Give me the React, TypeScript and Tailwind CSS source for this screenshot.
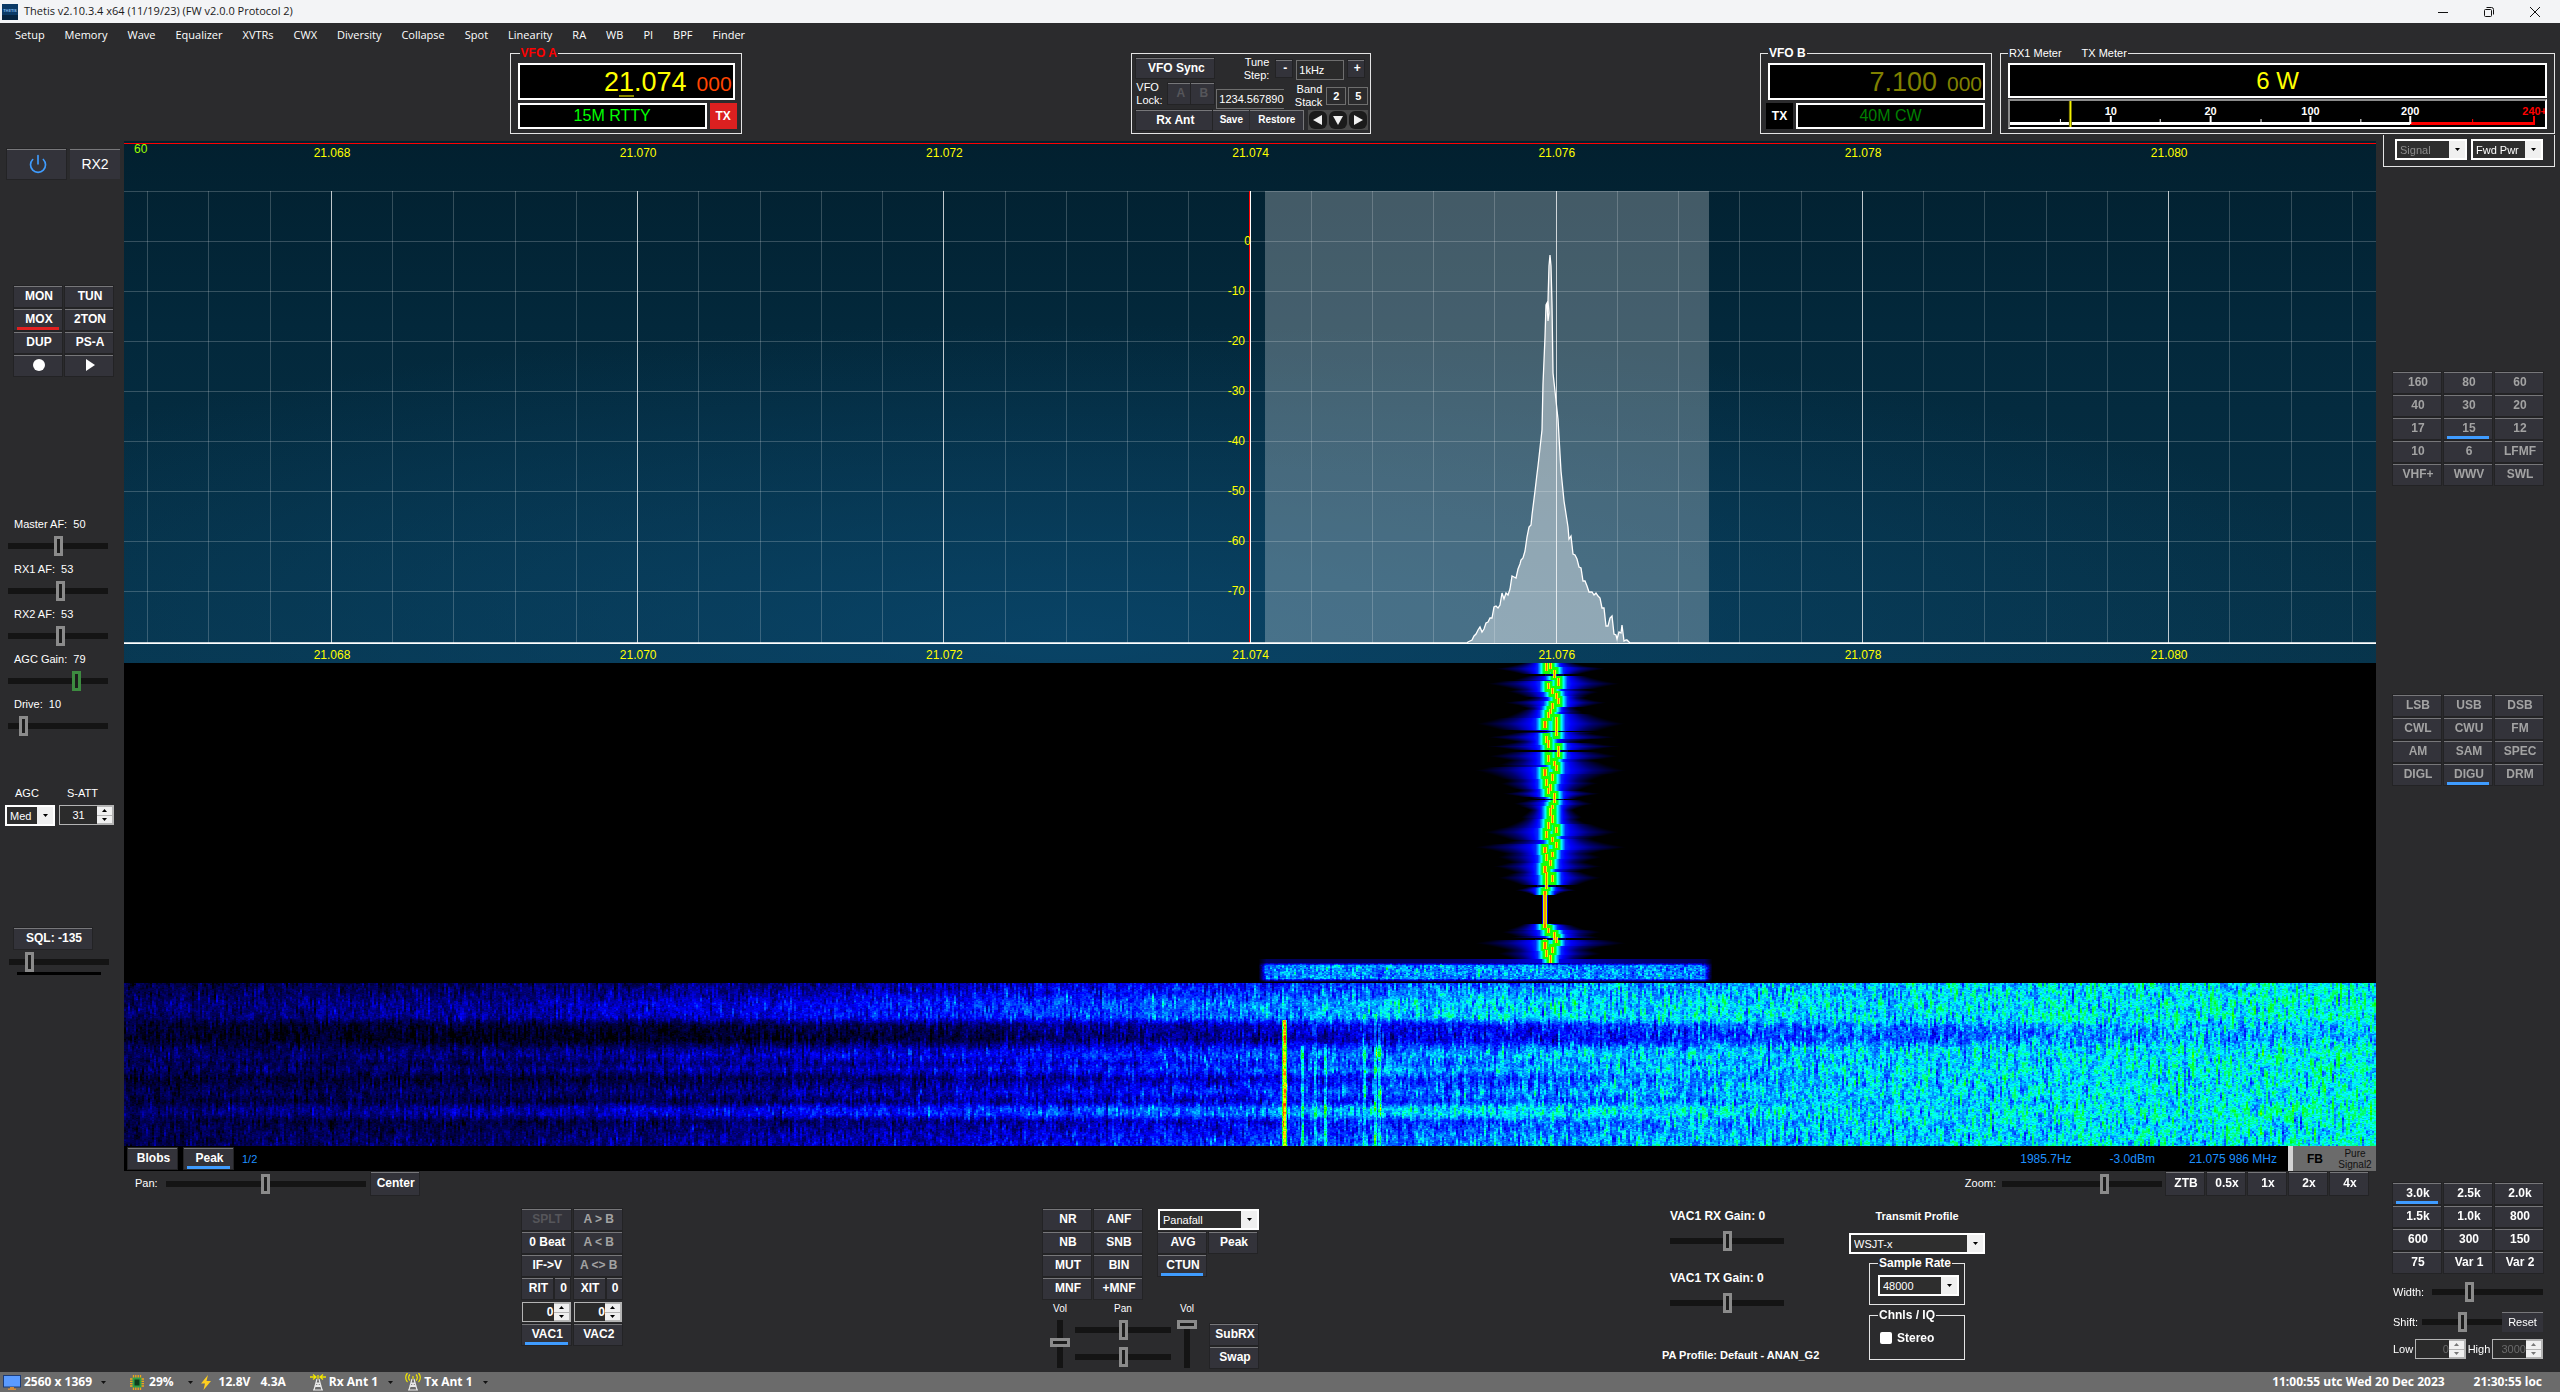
import { useEffect, useRef, type ReactNode } from 'react';
import { Power } from 'lucide-react';

const MENU = ['Setup', 'Memory', 'Wave', 'Equalizer', 'XVTRs', 'CWX', 'Diversity', 'Collapse', 'Spot', 'Linearity', 'RA', 'WB', 'PI', 'BPF', 'Finder'];
const BANDS = ['160', '80', '60', '40', '30', '20', '17', '15', '12', '10', '6', 'LFMF', 'VHF+', 'WWV', 'SWL'];
const MODES = ['LSB', 'USB', 'DSB', 'CWL', 'CWU', 'FM', 'AM', 'SAM', 'SPEC', 'DIGL', 'DIGU', 'DRM'];
const FILTERS = ['3.0k', '2.5k', '2.0k', '1.5k', '1.0k', '800', '600', '300', '150', '75', 'Var 1', 'Var 2'];
const DSP = ['NR', 'ANF', 'NB', 'SNB', 'MUT', 'BIN', 'MNF', '+MNF'];

interface BtnProps {
  children: ReactNode;
  className?: string;
  tone?: 'on' | 'dim' | 'off';
  mark?: 'blue' | 'red';
  label?: string;
}

function Btn({ children, className = 'h-[21px]', tone = 'on', mark, label }: BtnProps) {
  const color = tone === 'on' ? 'text-white' : tone === 'dim' ? 'text-[#a3a3a3]' : 'text-[#56565a]';
  return (
    <button
      type="button"
      aria-label={label}
      className={`relative flex items-center justify-center border-t border-t-[#77777a] bg-[#33333a] pb-[2px] pl-[2px] text-[12px] leading-[14px] font-bold whitespace-nowrap shadow-[0_0_0_1px_#232325] hover:bg-[#3d3d46] ${color} ${className}`}
    >
      {children}
      {mark && <span className={`absolute inset-x-[3px] bottom-0 h-[3px] ${mark === 'blue' ? 'bg-[#3f9cff]' : 'bg-[#e02020]'}`} />}
    </button>
  );
}

function Slider({ label, value, className = 'w-full', green = false }: { label: string; value: number; className?: string; green?: boolean }) {
  const thumb = green ? '[&::-webkit-slider-thumb]:border-[#3d8b40]' : '[&::-webkit-slider-thumb]:border-[#8b8b8b]';
  return (
    <input
      type="range"
      aria-label={label}
      defaultValue={value}
      className={`block h-5 min-w-0 appearance-none bg-transparent [&::-webkit-slider-runnable-track]:h-[6px] [&::-webkit-slider-runnable-track]:bg-[#141414] [&::-webkit-slider-thumb]:-mt-[7px] [&::-webkit-slider-thumb]:h-5 [&::-webkit-slider-thumb]:w-[9px] [&::-webkit-slider-thumb]:appearance-none [&::-webkit-slider-thumb]:border-[3px] [&::-webkit-slider-thumb]:bg-[#1c1c1c] ${thumb} ${className}`}
    />
  );
}

function VSlider({ label, value }: { label: string; value: number }) {
  return (
    <input
      type="range"
      aria-label={label}
      defaultValue={value}
      className="block h-12 w-5 appearance-none bg-transparent [direction:rtl] [writing-mode:vertical-lr] [&::-webkit-slider-runnable-track]:w-[6px] [&::-webkit-slider-runnable-track]:bg-[#141414] [&::-webkit-slider-thumb]:-ml-[7px] [&::-webkit-slider-thumb]:h-[9px] [&::-webkit-slider-thumb]:w-5 [&::-webkit-slider-thumb]:appearance-none [&::-webkit-slider-thumb]:border-[3px] [&::-webkit-slider-thumb]:border-[#8b8b8b] [&::-webkit-slider-thumb]:bg-[#1c1c1c]"
    />
  );
}

function Select({ label, value, options = [], className = '', disabled = false }: { label: string; value: string; options?: string[]; className?: string; disabled?: boolean }) {
  return (
    <div className={`flex h-[21px] border-2 border-white bg-[#2e2e2e] ${className}`}>
      <select
        aria-label={label}
        defaultValue={value}
        disabled={disabled}
        className={`min-w-0 flex-1 appearance-none bg-[#2e2e2e] pl-[3px] text-[11px] leading-[16px] ${disabled ? 'text-[#8d8d8d] opacity-100' : 'text-white'}`}
      >
        {[value, ...options].map((o) => (
          <option key={o}>{o}</option>
        ))}
      </select>
      <span className="pointer-events-none flex w-4 items-center justify-center bg-[#f0f0f0]">
        <svg width="5" height="3" viewBox="0 0 5 3"><path d="M0 0h5L2.5 3z" fill="#000" /></svg>
      </span>
    </div>
  );
}

function Spin({ label, value, className = '', dim = false, center = false, bold = false }: { label: string; value: string; className?: string; dim?: boolean; center?: boolean; bold?: boolean }) {
  const ink = dim ? '#777' : '#000';
  return (
    <div className={`flex h-5 border border-[#b4b4b4] bg-[#2b2b2b] ${className}`}>
      <input
        aria-label={label}
        defaultValue={value}
        className={`min-w-0 flex-1 bg-transparent leading-[16px] outline-none ${center ? 'text-center' : 'text-right'} ${dim ? 'text-[#6b6b6b]' : 'text-white'} ${bold ? 'text-[12px] font-bold' : 'text-[11px]'}`}
      />
      <span className="flex w-4 flex-col gap-px bg-[#b4b4b4] py-px pr-px">
        <button type="button" aria-label={`${label} up`} className="flex flex-1 items-center justify-center bg-[#f0f0f0]">
          <svg width="5" height="3" viewBox="0 0 5 3"><path d="M0 3h5L2.5 0z" fill={ink} /></svg>
        </button>
        <button type="button" aria-label={`${label} down`} className="flex flex-1 items-center justify-center bg-[#f0f0f0]">
          <svg width="5" height="3" viewBox="0 0 5 3"><path d="M0 0h5L2.5 3z" fill={ink} /></svg>
        </button>
      </span>
    </div>
  );
}

function Pad({ items, cols, active, tone }: { items: string[]; cols: 2 | 3; active?: string; tone?: 'on' | 'dim' }) {
  return (
    <div className={`grid gap-x-[3px] gap-y-[2px] ${cols === 2 ? 'grid-cols-[repeat(2,48px)]' : 'grid-cols-[repeat(3,48px)]'}`}>
      {items.map((t) => (
        <Btn key={t} tone={tone} mark={t === active ? 'blue' : undefined}>{t}</Btn>
      ))}
    </div>
  );
}

/* ---------- VFO + meter groups ---------- */

function Vfo({ name, mhz, hz, band, active }: { name: string; mhz: ReactNode; hz: string; band: string; active: boolean }) {
  const tx = (
    <button type="button" className={`h-[26px] w-[27px] text-[12px] font-bold text-white ${active ? 'bg-[#dc2020]' : 'bg-black'}`}>TX</button>
  );
  return (
    <fieldset className={`h-[87px] w-[232px] border border-[#e4e4e4] ${active ? 'pr-1 pl-[7px]' : 'pr-[6px] pl-[5px]'}`}>
      <legend className={`ml-[2px] px-px text-[12px] leading-[12px] font-bold ${active ? 'text-[#f00]' : 'text-white'}`}>{name}</legend>
      <div className={`mt-1 flex h-[37px] items-baseline justify-end gap-[10px] border-2 border-white bg-black pr-px leading-[34px] ${active ? 'mr-[2px] text-[#ff0]' : 'ml-[2px] text-[#808000]'}`}>
        <span className="text-[27px]">{mhz}</span>
        <span className={`text-[21px] ${active ? 'text-[#ff4500]' : ''}`}>{hz}</span>
      </div>
      <div className="mt-[3px] flex gap-[3px]">
        {!active && tx}
        <div className={`h-[26px] flex-1 border-2 border-white bg-black text-center text-[16px] leading-[22px] ${active ? 'text-[#0f0]' : 'text-[#008000]'}`}>{band}</div>
        {active && tx}
      </div>
    </fieldset>
  );
}

function ArrowBtn({ label, d }: { label: string; d: string }) {
  return (
    <button type="button" aria-label={label} className="h-5 w-5 bg-[#4a4a4a]">
      <svg width="20" height="20" viewBox="0 0 20 20">
        <rect x="1" y="1" width="18" height="18" rx="6" fill="#1b1b1b" />
        <path d={d} fill="#f0f0f0" />
      </svg>
    </button>
  );
}

function VfoTools() {
  return (
    <div className="mt-[6px] flex h-[81px] w-[240px] flex-col border border-[#e4e4e4] pt-1 pr-[2px] pl-1 text-[11px] leading-[13px]">
      <div className="flex h-[25px]">
        <Btn className="h-[20px] w-[78px]">VFO Sync</Btn>
        <label htmlFor="step" className="-mt-[2px] mr-[7px] ml-auto w-[26px] text-right">Tune Step:</label>
        <Btn className="mt-[2px] h-[17px] w-4">-</Btn>
        <input id="step" defaultValue="1kHz" className="mx-[4px] mt-[2px] h-[20px] w-12 border border-[#6e6e6e] bg-[#2b2b2b] pl-[2px]" />
        <Btn className="mt-[2px] mr-1 h-[17px] w-4">+</Btn>
      </div>
      <div className="flex h-[27px]">
        <span className="w-[32px] -mt-[2px]">VFO Lock:</span>
        <Btn tone="off" className="h-[21px] w-[23px]">A</Btn>
        <Btn tone="off" className="h-[21px] w-[23px]">B</Btn>
        <input aria-label="Saved frequency" defaultValue="1234.567890" className="mt-[6px] ml-[2px] h-[20px] w-[68px] border border-r-0 border-[#6e6e6e] bg-[#2b2b2b] pl-[2px]" />
        <span className="mr-[4px] ml-auto w-[32px] text-right">Band Stack</span>
        <span className="mt-1 mr-[2px] h-[18px] w-5 border border-[#6e6e6e] text-center leading-[16px] font-bold">2</span>
        <span className="mt-1 h-[18px] w-5 border border-[#6e6e6e] text-center leading-[16px] font-bold">5</span>
      </div>
      <div className="flex">
        <Btn className="h-[20px] w-[76px]">Rx Ant</Btn>
        <button type="button" className="ml-px h-[20px] w-[36px] border-t border-[#77777a] bg-[#33333a] pb-[2px] text-[10px] font-bold">Save</button>
        <button type="button" className="ml-px h-[20px] w-[54px] border-t border-r border-[#77777a] bg-[#33333a] pb-[2px] text-[10px] font-bold">Restore</button>
        <div className="ml-auto flex">
          <ArrowBtn label="Previous" d="M5 10l9-5v10z" />
          <ArrowBtn label="Drop down" d="M5 6h10l-5 9z" />
          <ArrowBtn label="Next" d="M15 10l-9-5v10z" />
        </div>
      </div>
    </div>
  );
}

function Meter() {
  const majors: [number, string][] = [[101, '10'], [201, '20'], [301, '100'], [401, '200']];
  return (
    <fieldset className="h-[87px] w-[555px] border border-[#e4e4e4] px-[7px]">
      <legend className="flex gap-5 px-px text-[11px] leading-[12px] text-white">
        <span>RX1 Meter</span>
        <span>TX Meter</span>
      </legend>
      <div className="mt-1 h-[35px] border-2 border-white bg-black text-center text-[24px] leading-[31px] text-[#ff0]">6 W</div>
      <svg className="mt-px block h-[30px] w-full border-2 border-t-[#8a8a8a] border-r-white border-b-white border-l-[#8a8a8a] bg-black" viewBox="0 0 536 26" preserveAspectRatio="none">
        <path d="M0 22.500H401" stroke="#fff" strokeWidth="3" />
        <path d="M401 22.500H526" stroke="#f00" strokeWidth="3" />
        {majors.map(([x, t]) => (
          <g key={t}>
            <rect x={x - 1} y="15" width="2" height="8" fill="#fff" />
            <text x={x} y="14" fill="#fff" fontSize="11" fontWeight="bold" textAnchor="middle">{t}</text>
          </g>
        ))}
        {[50, 150, 251, 351].map((x) => (
          <rect key={x} x={x} y="18" width="1" height="4" fill="#fff" />
        ))}
        <rect x="463" y="18" width="1" height="4" fill="#f00" />
        <rect x="524" y="15" width="2" height="8" fill="#f00" />
        <text x="538" y="14" fill="#f00" fontSize="11" fontWeight="bold" textAnchor="end">240+</text>
        <rect x="59" y="0" width="3" height="26" fill="#807c00" />
        <rect x="60" y="0" width="1" height="26" fill="#ff0" />
      </svg>
    </fieldset>
  );
}

/* ---------- spectrum ---------- */

// half outline of the TX carrier, [x, y] in plot pixels
const SKIRT_L: [number, number][] = [[1344, 501], [1348, 499], [1352, 490], [1358, 487], [1364, 478], [1374, 464], [1382, 452], [1390, 436], [1397, 418], [1403, 398], [1408, 374], [1411, 350], [1414, 325], [1418, 289], [1419, 243], [1421, 196], [1422, 164]];
const SKIRT_R: [number, number][] = [[1428, 164], [1429, 232], [1431, 250], [1434, 278], [1437, 330], [1440, 360], [1445, 392], [1451, 418], [1459, 436], [1468, 452], [1478, 466], [1484, 485], [1488, 481], [1493, 497], [1498, 485], [1500, 500], [1503, 499], [1506, 502]];

function rough(points: [number, number][], seed: number) {
  const out: string[] = [];
  let s = seed;
  for (let i = 0; i < points.length - 1; i++) {
    const [x0, y0] = points[i];
    const [x1, y1] = points[i + 1];
    for (let x = x0; x < x1; x += 2) {
      s = (s * 16807) % 2147483647;
      const jitter = y0 > 380 && y0 < 498 ? (s / 2147483647 - 0.5) * 14 : 0;
      out.push(`${x},${Math.min(502, Math.round(y0 + ((y1 - y0) * (x - x0)) / (x1 - x0) + jitter))}`);
    }
  }
  out.push(points[points.length - 1].join(','));
  return out;
}

const TRACE = ['0,502', '1343,502', ...rough(SKIRT_L, 7), '1423,162', '1424,180', '1425,172', '1424,160', '1425,125', '1426,114', '1427,125', ...rough(SKIRT_R, 23), '2252,502'].join(' ');

function Panadapter() {
  const freqs = ['21.068', '21.070', '21.072', '21.074', '21.076', '21.078', '21.080'];
  return (
    <svg className="block w-full" viewBox="0 0 2252 522" fontSize="12" fill="#ff0">
      <defs>
        <linearGradient id="sky" x1="0" y1="0" x2="0" y2="1">
          <stop offset="0" stopColor="#02202f" />
          <stop offset="0.35" stopColor="#03283b" />
          <stop offset="1" stopColor="#07344b" />
        </linearGradient>
        <radialGradient id="glow" cx="0.42" cy="0.95" r="0.6">
          <stop offset="0" stopColor="#0a4a72" stopOpacity="0.7" />
          <stop offset="1" stopColor="#0a4a72" stopOpacity="0" />
        </radialGradient>
      </defs>
      <rect width="2252" height="522" fill="url(#sky)" />
      <rect width="2252" height="522" fill="url(#glow)" />
      <rect y="2" width="2252" height="1" fill="#f00" />
      <rect x="1141" y="50" width="444" height="452" fill="#fff" fillOpacity="0.26" />
      {Array.from({ length: 37 }, (_, i) => Math.floor(23.700 + i * 61.240)).map((x, i) => (
        <rect key={x} x={x} y="50" width="1" height="452" fill="#fff" fillOpacity={i % 5 === 3 ? 0.75 : 0.2} />
      ))}
      {Array.from({ length: 9 }, (_, i) => (
        <rect key={i} y={50 + i * 50} width="2252" height="1" fill="#fff" fillOpacity="0.2" />
      ))}
      <rect x="1125" y="50" width="1" height="452" fill="#f00" />
      <rect x="1126" y="50" width="1" height="452" fill="#fff" />
      <polygon points={TRACE} fill="#fff" fillOpacity="0.4" />
      <polyline points={TRACE} fill="none" stroke="#fff" strokeWidth="1.300" />
      <rect y="502" width="2252" height="1" fill="#fff" />
      {freqs.map((f, i) => (
        <g key={f} textAnchor="middle">
          <text x={208 + i * 306.200} y="16">{f}</text>
          <text x={208 + i * 306.200} y="518">{f}</text>
        </g>
      ))}
      <text x="10" y="12" fill="#9bff00">60</text>
      <text x="1127" y="104" textAnchor="end">0</text>
      {[1, 2, 3, 4, 5, 6, 7].map((n) => (
        <text key={n} x="1121" y={104 + n * 50} textAnchor="end">{`-${n}0`}</text>
      ))}
    </svg>
  );
}

// colour stops of the waterfall palette: level, r, g, b
const PALETTE = [
  [0, 0, 0, 0], [0.2, 0, 0, 110], [0.38, 0, 0, 255], [0.52, 0, 110, 255], [0.66, 0, 255, 255],
  [0.8, 0, 255, 0], [0.9, 255, 255, 0], [0.96, 255, 120, 0], [1, 255, 40, 0],
];

// [offset in thirds of a pixel, start, end] of every keyed tone, top of the waterfall first
const TONES = [
  [438, 120, 155], [450, 120, 150], [462, 145, 175], [474, 170, 200], [444, 185, 210], [456, 200, 225], [468, 215, 240],
  [474, 230, 255], [456, 245, 270], [450, 262, 285], [444, 272, 297], [433, 297, 325], [468, 285, 350], [438, 342, 370],
  [444, 355, 385], [474, 372, 412], [444, 400, 428], [462, 418, 440], [468, 430, 455], [433, 443, 470], [456, 458, 485],
  [438, 472, 500], [450, 488, 515], [444, 500, 525], [462, 515, 550], [456, 550, 570], [450, 560, 590], [456, 580, 610],
  [444, 600, 628], [468, 615, 642], [438, 628, 655], [456, 645, 668], [468, 660, 685], [433, 676, 700], [456, 690, 712],
  [438, 698, 725], [450, 715, 740], [433, 732, 760], [438, 750, 808], [456, 760, 788], [433, 808, 925], [444, 918, 942],
  [462, 932, 955], [468, 945, 972], [433, 960, 988], [456, 975, 1000], [438, 985, 1012], [450, 1000, 1032],
];

// splatter lobes: centre, half width, decay
const LOBES = [
  [145, 160, 9], [190, 190, 12], [215, 130, 14], [247, 150, 9], [310, 210, 18], [350, 185, 8], [378, 185, 8], [407, 185, 12],
  [450, 210, 22], [490, 140, 18], [520, 145, 7], [550, 120, 12], [590, 90, 24], [635, 190, 18], [680, 215, 14], [710, 150, 18],
  [738, 155, 14], [772, 150, 14], [809, 95, 6], [935, 145, 13], [968, 215, 14], [1000, 150, 18], [1020, 120, 12],
];
const PINCHES = [163, 333, 392, 537, 796, 955];

function along(pts: number[][], v: number) {
  for (let i = 1; i < pts.length; i++) {
    if (v <= pts[i][0]) {
      const k = (v - pts[i - 1][0]) / (pts[i][0] - pts[i - 1][0]);
      return pts[i - 1][1] + (pts[i][1] - pts[i - 1][1]) * k;
    }
  }
  return pts[pts.length - 1][1];
}

// brightness of the band noise down the rows and across the columns
const ROWS = [[0, -0.04], [12, 0.03], [20, 0.1], [34, 0.09], [42, -0.14], [56, -0.19], [66, 0], [72, 0.05], [80, -0.03], [86, 0.04], [95, -0.11], [104, -0.04], [108, 0], [118, -0.09], [125, 0.1], [131, 0.1], [138, -0.08], [150, -0.02], [163, 0.02]];
const COLUMNS = [[0, 0.14], [400, 0.18], [800, 0.3], [1100, 0.42], [1300, 0.52], [1500, 0.58], [1800, 0.62], [2252, 0.67]];

function Waterfall() {
  const ref = useRef<HTMLCanvasElement>(null);

  useEffect(() => {
    const ctx = ref.current?.getContext('2d');
    if (!ctx) return;
    const W = 2252;
    const H = 483;
    const img = ctx.createImageData(W, H);
    let seed = 90210;
    const rnd = () => {
      seed = (seed * 16807) % 2147483647;
      return seed / 2147483647;
    };
    const gauss = () => (rnd() + rnd() + rnd() - 1.5) * 1.4;

    const plot = (x: number, y: number, level: number) => {
      const v = Math.max(0, Math.min(1, level));
      let i = 1;
      while (v > PALETTE[i][0]) i++;
      const a = PALETTE[i - 1];
      const b = PALETTE[i];
      const k = (v - a[0]) / (b[0] - a[0]);
      const p = (y * W + x) * 4;
      img.data[p] = a[1] + (b[1] - a[1]) * k;
      img.data[p + 1] = a[2] + (b[2] - a[2]) * k;
      img.data[p + 2] = a[3] + (b[3] - a[3]) * k;
      img.data[p + 3] = 255;
    };

    // transmit section
    for (let y = 0; y < 320; y++) {
      const r = y * 3 + 129;
      const near = TONES.filter((t) => r >= t[1] - 4 && r <= t[2] + 4);
      const on = TONES.filter((t) => r >= t[1] + 4 && r <= t[2] - 4);
      const idle = r > 822 && r < 912;
      const pinch = PINCHES.some((p) => Math.abs(p - r) < 3);
      let reach = 0;
      for (const [c, w, s] of LOBES) reach = Math.max(reach, w * Math.exp(-Math.abs(r - c) / s / 2.4));
      reach = Math.max(12, reach / 3);
      for (let x = 0; x < W; x++) {
        let level = 0;
        if (x > 1330 && x < 1520 && r < 1034) {
          const pos = (x + 124 - 1400) * 3;
          const dn = Math.min(99, ...near.map((t) => Math.abs(t[0] - pos) / 3));
          const dOn = Math.min(99, ...on.map((t) => Math.abs(t[0] - pos) / 3));
          if (idle || pinch) {
            level = dn < 1 ? 0.95 : dn < 2 ? 0.88 : dn < 3 ? 0.36 : pinch && dn < 10 ? 0.15 : 0;
          } else {
            if (dn < 3) level = 0.81;
            else if (dn < 9) level = 0.78 - (dn - 3) * 0.056;
            else if (dn < reach) level = 0.43 * Math.pow(1 - (dn - 9) / (reach - 9), 1.2);
            if (dOn < 1) level = 0.97;
            else if (dOn < 2) level = 0.89;
          }
        }
        plot(x, y, level);
      }
    }

    // keying burst across the transmit passband
    const burst = new Float32Array(W);
    for (let y = 296; y < 320; y++) {
      for (let x = 1134; x < 1588; x++) {
        const edge = Math.min(1, (x - 1134) / 8, (1588 - x) / 8);
        if (y < 300) {
          const d = Math.abs(x - 1426);
          if (d > 8) plot(x, y, (0.16 + 0.22 * Math.exp(-d / 60)) * edge);
          continue;
        }
        if (x % 2 === 0) burst[x] = 0.55 * burst[x] + 0.5 * gauss();
        const fade = Math.min(1, (y - 298) / 4, (319 - y) / 4);
        plot(x, y, (0.55 + 0.16 * burst[x - (x % 2)]) * edge * fade);
      }
    }

    // receive noise floor
    const column = new Float32Array(W);
    for (let x = 0; x < W; x++) column[x] = gauss();
    const lines = [[1178, 0.2, 62], [1191, 0.14, 40], [1201, 0.2, 60], [1240, 0.14, 30], [1251, 0.18, 30], [1255, 0.18, 40]];
    for (let y = 320; y < H; y++) {
      const t = y - 320;
      const shade = along(ROWS, t);
      for (let x = 0; x < W; x++) {
        if (x % 2 === 0) column[x] = 0.8 * column[x] + 0.5 * gauss();
        const n = column[x - (x % 2)];
        const right = t > 36 && t < 64 ? Math.max(0.3, 1.1 - (x - 1300) / 1100) : Math.max(0.15, 1 - (x - 1300) / 500);
        const weight = x < 600 ? 0.35 + x / 920 : x < 1300 ? 1 : Math.min(1, right);
        const base = along(COLUMNS, x);
        let level = base + shade * weight + n * (0.08 + base * 0.09);
        if (level > 0.72) level = 0.72 + (level - 0.72) * 0.5;
        for (const [lx, gain, from] of lines) {
          if (t > from && Math.abs(x - lx) < 2) level += gain;
        }
        if (t > 36 && x > 1157 && x < 1163) level = (x === 1158 || x === 1162 ? 0.78 : 0.92) + n * 0.08;
        plot(x, y, level);
      }
    }
    ctx.putImageData(img, 0, 0);
  }, []);

  return <canvas ref={ref} width={2252} height={483} className="block w-full bg-black" />;
}

/* ---------- columns ---------- */

function LeftPanel() {
  const levels: [string, string, number, boolean][] = [
    ['Master AF:', '50', 50, false], ['RX1 AF:', '53', 53, false], ['RX2 AF:', '53', 53, false], ['AGC Gain:', '79', 70, true], ['Drive:', '10', 12, false],
  ];
  return (
    <aside className="flex w-[124px] shrink-0 flex-col text-[11px] leading-[14px]">
      <div className="mt-[14px] ml-[7px] flex gap-1">
        <Btn label="Power" className="h-[30px] w-[59px]"><Power className="h-5 w-5 text-[#3f9cff]" strokeWidth={2} /></Btn>
        <button type="button" className="h-[30px] w-[50px] border-t border-[#77777a] bg-[#33333a] pb-[2px] text-[14px]">RX2</button>
      </div>
      <div className="mt-[107px] ml-[14px] grid grid-cols-[repeat(2,48px)] gap-x-[3px] gap-y-[2px]">
        <Btn>MON</Btn>
        <Btn>TUN</Btn>
        <Btn mark="red">MOX</Btn>
        <Btn>2TON</Btn>
        <Btn>DUP</Btn>
        <Btn>PS-A</Btn>
        <Btn label="Record"><svg width="12" height="12"><circle cx="6" cy="6" r="6" fill="#fff" /></svg></Btn>
        <Btn label="Play"><svg width="9" height="12"><path d="M0 0l9 6-9 6z" fill="#fff" /></svg></Btn>
      </div>
      <div className="mt-[141px] ml-2 flex w-[100px] flex-col gap-[6px]">
        {levels.map(([name, val, pos, green]) => (
          <div key={name} className="flex flex-col gap-[5px]">
            <span className="pl-[6px] whitespace-pre">{`${name}  ${val}`}</span>
            <Slider label={name} value={pos} green={green} />
          </div>
        ))}
      </div>
      <div className="mt-[50px] ml-[5px] grid grid-cols-[50px_55px] gap-x-1 gap-y-[5px]">
        <span className="pl-[10px]">AGC</span>
        <span className="pl-[8px]">S-ATT</span>
        <Select label="AGC" value="Med" options={['Fast', 'Slow']} />
        <Spin label="S-ATT" value="31" center />
      </div>
      <Btn className="mt-[102px] ml-[14px] h-[21px] w-[78px]">SQL: -135</Btn>
      <div className="mt-[3px] ml-[9px] w-[100px]">
        <Slider label="Squelch" value={18} />
        <div className="mx-2 h-[3px] bg-black" />
      </div>
    </aside>
  );
}

function RightPanel() {
  return (
    <aside className="flex w-[184px] shrink-0 flex-col text-[11px] leading-[14px]">
      <div className="mr-[5px] ml-[7px] flex h-[32px] gap-1 border border-t-0 border-[#e4e4e4] pt-1 pl-[11px]">
        <Select label="RX meter" value="Signal" disabled className="w-[72px]" />
        <Select label="TX meter" value="Fwd Pwr" className="w-[72px]" />
      </div>
      <div className="mt-[205px] flex flex-col pl-[17px]">
        <Pad items={BANDS} cols={3} active="15" tone="dim" />
        <div className="mt-[210px]"><Pad items={MODES} cols={3} active="DIGU" tone="dim" /></div>
        <div className="mt-[398px]"><Pad items={FILTERS} cols={3} active="3.0k" /></div>
        <div className="mt-[9px] flex w-[150px] items-center gap-2">
          <span>Width:</span>
          <Slider label="Width" value={32} className="flex-1" />
        </div>
        <div className="mt-[10px] flex w-[150px] items-center">
          <span className="pr-1">Shift:</span>
          <Slider label="Shift" value={51} className="flex-1" />
          <button type="button" className="h-5 w-[41px] border-t border-[#77777a] bg-[#33333a] pb-[2px]">Reset</button>
        </div>
        <div className="mt-[7px] flex w-[150px] items-center justify-between">
          <span>Low</span>
          <Spin label="Low" value="0" dim className="w-[51px]" />
          <span>High</span>
          <Spin label="High" value="3000" dim className="w-[51px]" />
        </div>
      </div>
    </aside>
  );
}

function DisplayStrip() {
  return (
    <div className="flex h-[25px] items-center bg-black pl-1 text-[12px] leading-[14px] text-[#1e90ff]">
      <Btn className="h-[21px] w-[49px]">Blobs</Btn>
      <Btn mark="blue" className="ml-[7px] h-[21px] w-[49px]">Peak</Btn>
      <span className="ml-[9px] text-[11px]">1/2</span>
      <span className="ml-auto">1985.7Hz</span>
      <span className="ml-[38px]">-3.0dBm</span>
      <span className="ml-[34px]">21.075 986 MHz</span>
      <div className="ml-[11px] flex h-full w-[88px] items-center border-l-[5px] border-[#d4d4d4] bg-[#6b6b6b] text-black">
        <span className="ml-[14px] font-bold">FB</span>
        <span className="ml-auto w-[42px] text-center text-[10px] leading-[11px] text-[#111]">Pure Signal2</span>
      </div>
    </div>
  );
}

function BottomControls() {
  return (
    <>
      <div className="flex h-[38px] items-start pt-px pr-2 pl-[11px] text-[11px] leading-[23px]">
        <span>Pan:</span>
        <Slider label="Pan" value={50} className="mt-[2px] ml-[8px] w-[200px]" />
        <Btn className="ml-[5px] h-[23px] w-12">Center</Btn>
        <span className="ml-auto">Zoom:</span>
        <Slider label="Zoom" value={65} className="mt-[2px] mr-1 ml-[6px] w-[160px]" />
        <div className="flex gap-[3px]">
          {['ZTB', '0.5x', '1x', '2x', '4x'].map((z) => (
            <Btn key={z} className="h-[23px] w-[38px]">{z}</Btn>
          ))}
        </div>
      </div>

      <div className="flex text-[12px] leading-[14px]">
        <div className="grow-[398]" />
        <div className="grid w-[100px] grid-cols-2 gap-x-[3px] gap-y-[2px] self-start">
          <Btn tone="off">SPLT</Btn>
          <Btn tone="dim">A &gt; B</Btn>
          <Btn>0 Beat</Btn>
          <Btn tone="dim">A &lt; B</Btn>
          <Btn>IF-&gt;V</Btn>
          <Btn tone="dim">A &lt;&gt; B</Btn>
          <div className="grid grid-cols-[31px_15px] gap-[2px]"><Btn>RIT</Btn><Btn>0</Btn></div>
          <div className="grid grid-cols-[31px_15px] gap-[2px]"><Btn>XIT</Btn><Btn>0</Btn></div>
          <Spin label="RIT" value="0" bold className="mt-px" />
          <Spin label="XIT" value="0" bold className="mt-px" />
          <Btn mark="blue">VAC1</Btn>
          <Btn>VAC2</Btn>
        </div>
        <div className="grow-[421]" />

        <div className="w-[216px]">
          <div className="flex justify-between">
            <Pad items={DSP} cols={2} />
            <div className="flex flex-col gap-[2px]">
              <Select label="Display mode" value="Panafall" options={['Panadapter', 'Waterfall']} className="w-[101px]" />
              <Pad items={['AVG', 'Peak', 'CTUN']} cols={2} active="CTUN" />
            </div>
          </div>
          <div className="mt-1 flex pl-[7px] text-[10px] leading-[12px]">
            <div className="flex w-5 flex-col items-center gap-[5px]">
              <span>Vol</span>
              <VSlider label="Volume RX1" value={54} />
            </div>
            <div className="ml-[5px] flex w-24 flex-col items-center gap-[5px]">
              <span>Pan</span>
              <Slider label="Pan RX1" value={51} />
              <Slider label="Pan sub RX" value={51} className="mt-[2px] w-full" />
            </div>
            <div className="ml-[6px] flex w-5 flex-col items-center gap-[5px]">
              <span>Vol</span>
              <VSlider label="Volume sub RX" value={100} />
            </div>
            <div className="mt-[21px] ml-[13px] flex w-12 flex-col gap-[2px]">
              <Btn>SubRX</Btn>
              <Btn>Swap</Btn>
            </div>
          </div>
        </div>
        <div className="grow-[403]" />

        <div className="w-[163px] font-bold whitespace-nowrap">
          <div className="w-[122px] pl-2">
            <div>VAC1 RX Gain: 0</div>
            <Slider label="VAC1 RX Gain" value={50} className="mt-2 w-full" />
            <div className="mt-5">VAC1 TX Gain: 0</div>
            <Slider label="VAC1 TX Gain" value={50} className="mt-2 w-full" />
          </div>
          <div className="mt-[35px] text-[11px]">PA Profile: Default - ANAN_G2</div>
        </div>
        <div className="ml-6 w-[136px]">
          <div className="text-center text-[11px] font-bold">Transmit Profile</div>
          <Select label="Transmit Profile" value="WSJT-x" className="mt-[10px]" />
          <fieldset className="mx-5 mt-[2px] h-[49px] border border-[#e4e4e4] pr-[5px] pl-2">
            <legend className="px-px font-bold">Sample Rate</legend>
            <Select label="Sample Rate" value="48000" options={['96000', '192000']} className="mt-[5px]" />
          </fieldset>
          <fieldset className="mx-5 mt-[3px] h-[52px] border border-[#e4e4e4] px-[10px]">
            <legend className="-ml-[2px] px-px font-bold">Chnls / IQ</legend>
            <label className="mt-[9px] flex items-center gap-[5px] font-bold">
              <input type="checkbox" className="h-3 w-3 appearance-none rounded-[2px] bg-white checked:bg-[#3f9cff]" />
              Stereo
            </label>
          </fieldset>
        </div>
        <div className="grow-[391]" />
      </div>
    </>
  );
}

function Caret() {
  return <svg width="5" height="3" viewBox="0 0 5 3"><path d="M0 0h5L2.500 3z" fill="#111" /></svg>;
}

function Tower({ tx }: { tx?: boolean }) {
  return (
    <svg width="16" height="18" viewBox="0 0 16 18" fill="none">
      <path d="M7 6L4 17M9 6l3 11M6 10h4M5 13.500h6M3 17h10M6 10l5 3.500M10 10l-5 3.500" stroke="#e8e8e8" strokeWidth="1.200" />
      {tx ? (
        <path d="M5 1.500a4 4 0 000 6M11 1.500a4 4 0 010 6M2.500 0a6.500 6.500 0 000 9M13.500 0a6.500 6.500 0 010 9M8 3v3" stroke="#f2e600" strokeWidth="1.200" />
      ) : (
        <path d="M0 4h5M16 4h-5M3 1.500L6 4 3 6.500M13 1.500L10 4l3 2.500M8 2v4" stroke="#f2e600" strokeWidth="1.300" />
      )}
    </svg>
  );
}

function StatusBar() {
  return (
    <footer className="mt-auto flex h-5 items-center bg-[#6b6b6b] pr-[18px] pl-[3px] font-['Open_Sans',sans-serif] text-[12px] leading-[18px] font-bold whitespace-nowrap">
      <svg width="18" height="15" viewBox="0 0 18 15">
        <rect x="0.5" y="0.5" width="17" height="11.500" fill="#5b9bff" stroke="#1c3c78" />
        <path d="M7 12h4v2H7zM5 13.500h8V15H5z" fill="#d08a3a" />
      </svg>
      <span className="mr-[9px] ml-[3px]">2560 x 1369</span>
      <Caret />
      <svg className="ml-6" width="14" height="15" viewBox="0 0 14 15">
        <path d="M3.500 0v15M5.800 0v15M8.200 0v15M10.500 0v15M0 4h14M0 6.300h14M0 8.700h14M0 11h14" stroke="#f0a818" strokeWidth="1.300" />
        <rect x="2.500" y="2.500" width="9" height="10" fill="#2e9e48" />
        <rect x="4.500" y="4.500" width="5" height="6" fill="#0f3d1c" />
      </svg>
      <span className="mr-[14px] ml-[5px]">29%</span>
      <Caret />
      <svg className="ml-2" width="10" height="15" viewBox="0 0 10 15"><path d="M7 0L0 8.500h4L2.500 15 10 6H5.500z" fill="#ffcf20" /></svg>
      <span className="ml-2">12.8V</span>
      <span className="mr-6 ml-[10px]">4.3A</span>
      <Tower />
      <span className="mr-[10px] ml-[3px]">Rx Ant 1</span>
      <Caret />
      <span className="w-3" />
      <Tower tx />
      <span className="mr-[10px] ml-[3px]">Tx Ant 1</span>
      <Caret />
      <span className="ml-auto">11:00:55 utc Wed 20 Dec 2023</span>
      <span className="ml-[29px]">21:30:55 loc</span>
    </footer>
  );
}

export default function App() {
  return (
    <div className="flex min-h-screen flex-col bg-[#2b2b2d] font-['Liberation_Sans',Arial,sans-serif] text-white">
      <header className="flex h-[23px] items-center bg-[#f3f4f6] pr-[2px] pl-[2px] font-['Open_Sans',sans-serif] text-[11px] text-[#1a1a1a]">
        <svg width="16" height="16" viewBox="0 0 16 16">
          <rect width="16" height="16" fill="#0b3a66" />
          <path d="M0 11h16v5H0z" fill="#062440" />
          <text x="8" y="8" fontSize="4" fontWeight="bold" fill="#7fb8e8" textAnchor="middle">THETIS</text>
        </svg>
        <h1 className="ml-[6px]">Thetis v2.10.3.4 x64 (11/19/23) (FW v2.0.0 Protocol 2)</h1>
        <div className="ml-auto flex">
          <button type="button" aria-label="Minimize" className="flex h-[23px] w-[46px] items-center justify-center">
            <svg width="10" height="10" viewBox="0 0 10 10"><path d="M0 5.500h10" stroke="#111" /></svg>
          </button>
          <button type="button" aria-label="Restore window" className="flex h-[23px] w-[46px] items-center justify-center">
            <svg width="10" height="10" viewBox="0 0 10 10" fill="none" stroke="#111"><rect x="0.500" y="2.500" width="7" height="7" rx="1" /><path d="M2.500 .5h5a2 2 0 012 2v5" /></svg>
          </button>
          <button type="button" aria-label="Close" className="flex h-[23px] w-[46px] items-center justify-center">
            <svg width="10" height="10" viewBox="0 0 10 10"><path d="M0 0l10 10M10 0L0 10" stroke="#111" /></svg>
          </button>
        </div>
      </header>

      <nav className="flex h-6 items-center gap-5 pl-[15px] font-['Open_Sans',sans-serif] text-[11px]">
        {MENU.map((m) => (
          <a key={m} href="#" className="hover:underline">{m}</a>
        ))}
      </nav>

      <div className="flex h-[88px] pr-[5px]">
        <div className="grow-[510]" />
        <Vfo name="VFO A" active mhz={<>2<span className="shadow-[inset_0_-2px_0_#8a8a00]">1</span>.074</>} hz="000" band="15M RTTY" />
        <div className="grow-[390]" />
        <VfoTools />
        <div className="grow-[389]" />
        <Vfo name="VFO B" active={false} mhz="7.100" hz="000" band="40M CW" />
        <div className="w-2" />
        <Meter />
      </div>

      <div className="flex">
        <LeftPanel />
        <main className="min-w-0 flex-1 pt-[6px]">
          <Panadapter />
          <Waterfall />
          <DisplayStrip />
          <BottomControls />
        </main>
        <RightPanel />
      </div>

      <StatusBar />
    </div>
  );
}
